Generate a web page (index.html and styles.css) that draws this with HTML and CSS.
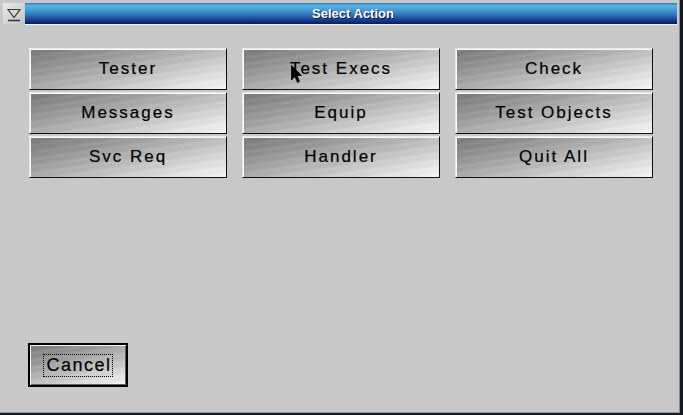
FILE: index.html
```html
<!DOCTYPE html>
<html>
<head>
<meta charset="utf-8">
<link rel="stylesheet" href="styles.css">
</head>
<body>
<div class="screen">
  <div class="window">
    <div class="titlerow">
      <div class="menubtn">
        <svg width="18" height="18" viewBox="0 0 18 18">
          <path d="M3 4.5 H15 L9 12.5 Z" fill="none" stroke="#3a3a3a" stroke-width="1.2"/>
          <path d="M3 15.5 H15" stroke="#3a3a3a" stroke-width="1.6"/>
        </svg>
      </div>
      <div class="titlebar"><span class="title">Select Action</span></div>
    </div>
    <div class="grid">
      <button class="btn">Tester</button>
      <button class="btn">Test Execs</button>
      <button class="btn">Check</button>
      <button class="btn">Messages</button>
      <button class="btn">Equip</button>
      <button class="btn">Test Objects</button>
      <button class="btn">Svc Req</button>
      <button class="btn">Handler</button>
      <button class="btn">Quit All</button>
    </div>
    <div class="spacer"></div>
    <div class="footer">
      <button class="cancel"><span class="focus">Cancel</span></button>
    </div>
    <svg class="cursor" width="12" height="19" viewBox="0 0 12 19">
      <path d="M0.5 0.5 V15 L4 11.5 L6.5 17.5 L8.5 16.5 L6 10.5 H10.5 Z" fill="#000" stroke="#000" stroke-width="0.8"/>
    </svg>
  </div>
</div>
</body>
</html>
```
FILE: styles.css
```css
html, body {
  margin: 0;
  padding: 0;
  background: #121a24;
}
.screen {
  width: 683px;
  height: 415px;
  overflow: hidden;
  background: #121a24;
}
.window {
  position: relative;
  width: 679px;
  height: 412px;
  background: #c8c8c8;
  border-right: 1px solid #8a8a8a;
  border-bottom: 1px solid #9a9a9a;
  display: flex;
  flex-direction: column;
  font-family: "Liberation Sans", Arial, sans-serif;
}
.titlerow {
  display: flex;
  padding: 3px 2px 0 3px;
  height: 22px;
}
.menubtn {
  width: 21px;
  height: 21px;
  background: linear-gradient(135deg, #e8e8e8, #d4d4d4 60%, #c4c4c4);
  display: flex;
  align-items: center;
  justify-content: center;
}
.titlebar {
  flex: 1;
  height: 21px;
  margin-left: 1px;
  border-bottom: 1px solid #f4f4f4;
  background: linear-gradient(#2c78b8 0%, #58b0e0 12%, #4aa0d6 30%, #3078bc 55%, #1a4494 78%, #0c1a62 100%);
  display: flex;
  align-items: center;
  justify-content: center;
}
.title {
  color: #fff;
  font-weight: bold;
  font-size: 13px;
  text-shadow: 1px 1px 0 #0a1440;
  margin-left: 4px;
}
.grid {
  display: grid;
  grid-template-columns: repeat(3, 198px);
  grid-auto-rows: 42px;
  column-gap: 15px;
  row-gap: 2px;
  margin: 23px 0 0 29px;
}
.btn, .cancel {
  font-family: "Liberation Sans", Arial, sans-serif;
  color: #000;
  padding: 0;
  margin: 0;
  cursor: default;
  -webkit-text-stroke: 0.2px #000;
  background:
    repeating-linear-gradient(172deg, rgba(255,255,255,0.035) 0 3px, rgba(0,0,0,0.02) 3px 7px),
    linear-gradient(165deg, #787878 0%, #989898 28%, #c0c0c0 58%, #e4e4e4 84%, #f8f8f8 100%);
}
.btn {
  font-size: 17px;
  letter-spacing: 2px;
  border: 1px solid;
  border-color: #e8e8e8 #101010 #101010 #e8e8e8;
  box-shadow: inset 1px 1px 0 #fafafa;
}
.spacer {
  flex: 1;
}
.footer {
  display: flex;
  padding: 0 0 25px 28px;
}
.cancel {
  width: 100px;
  height: 44px;
  border: 2px solid #000;
  box-shadow: inset 1px 1px 0 #f4f4f4, inset -1px -1px 0 #606060;
  display: flex;
  align-items: center;
  justify-content: center;
  font-size: 18px;
  letter-spacing: 1.5px;
}
.focus {
  border: 1px dotted #000;
  padding: 1px 0 1px 2px;
  line-height: 19px;
}
.cursor {
  position: absolute;
  left: 291px;
  top: 65px;
}
```
